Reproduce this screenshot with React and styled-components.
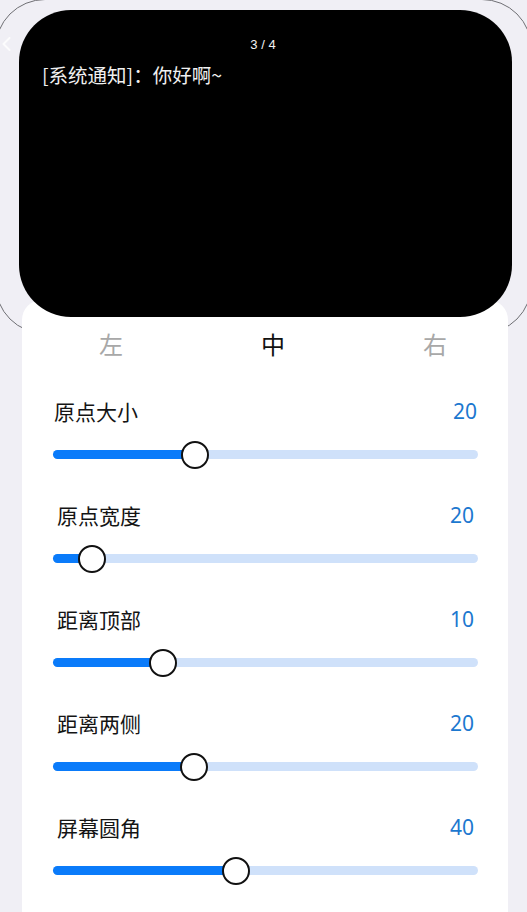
import React from "react";
import styled, { createGlobalStyle } from "styled-components";

const GlobalStyle = createGlobalStyle`
  html, body {
    margin: 0;
    padding: 0;
    background: #f0eff5;
    font-family: "Noto Sans CJK SC", "Noto Sans", sans-serif;
  }
`;

const sliders = [
  { label: "原点大小", value: 20, pct: 33.4, wide: true },
  { label: "原点宽度", value: 20, pct: 9.2 },
  { label: "距离顶部", value: 10, pct: 25.9 },
  { label: "距离两侧", value: 20, pct: 33.2 },
  { label: "屏幕圆角", value: 40, pct: 43 },
];

const tabs = ["左", "中", "右"];

const App = () => {
  return (
    <Page>
      <GlobalStyle />
      <Device>
        <BackButton aria-label="back">
          <svg width="9" height="14" viewBox="0 0 9 14">
            <polyline
              points="7.5,1 1.5,7 7.5,13"
              fill="none"
              stroke="#ffffff"
              strokeWidth="2"
              strokeLinecap="round"
              strokeLinejoin="round"
            />
          </svg>
        </BackButton>
        <Screen>
          <Counter>3 / 4</Counter>
          <Notice>[系统通知]：你好啊~</Notice>
        </Screen>
      </Device>
      <Card>
        <Tabs>
          {tabs.map((t) => (
            <Tab key={t} active={t === "中"}>
              {t}
            </Tab>
          ))}
        </Tabs>
        {sliders.map((s) => (
          <Row key={s.label}>
            <Header inset={s.wide ? "1px" : "4px"}>
              <Label>{s.label}</Label>
              <Value>{s.value}</Value>
            </Header>
            <Track>
              <Fill style={{ width: `${s.pct}%` }} />
              <Thumb style={{ left: `${s.pct}%` }} />
            </Track>
          </Row>
        ))}
      </Card>
    </Page>
  );
};

export default App;

const Page = styled.div`
  height: 912px;
  overflow: hidden;
`;

const Device = styled.div`
  position: relative;
  box-sizing: border-box;
  height: 335px;
  margin: -1px -5px 0;
  padding: 10px 19px 0 23px;
  border: 1px solid #6f6f74;
  border-radius: 50px;
`;

const BackButton = styled.div`
  position: absolute;
  left: 6px;
  top: 37px;
  opacity: 0.85;
  display: flex;
`;

const Screen = styled.div`
  position: relative;
  z-index: 2;
  height: 307px;
  box-sizing: border-box;
  padding: 27px 23px 0;
  background: #000;
  border-radius: 52px;
  display: flex;
  flex-direction: column;
`;

const Counter = styled.div`
  align-self: center;
  margin-right: 5px;
  font-family: "Liberation Sans", "Noto Sans", sans-serif;
  font-size: 13px;
  line-height: 16px;
  color: #f2f2f2;
`;

const Notice = styled.div`
  margin-top: 10px;
  font-size: 19.5px;
  line-height: 24px;
  color: #f0f0f0;
`;

const Card = styled.div`
  position: relative;
  z-index: 1;
  margin: -34px 19px 0 22px;
  padding-top: 29px;
  min-height: 640px;
  background: #ffffff;
  border-radius: 20px 20px 0 0;
`;

const Tabs = styled.div`
  display: grid;
  grid-template-columns: repeat(3, 162px);
  margin-left: 8px;
`;

const Tab = styled.div`
  text-align: center;
  font-size: 24px;
  line-height: 30px;
  color: ${({ active }) => (active ? "#111111" : "#a8a8a8")};
`;

const Row = styled.div`
  padding: 38px 30px 0 31px;
  & + & {
    padding-top: 42px;
  }
`;

const Header = styled.div`
  display: flex;
  justify-content: space-between;
  align-items: center;
  height: 28px;
  padding: 0 ${({ inset }) => inset};
`;

const Label = styled.span`
  font-size: 21px;
  line-height: 28px;
  color: #141414;
`;

const Value = styled.span`
  font-family: "Noto Sans", "Liberation Sans", sans-serif;
  font-size: 21px;
  line-height: 28px;
  color: #1c78cf;
`;

const Track = styled.div`
  position: relative;
  margin-top: 25px;
  height: 9px;
  border-radius: 5px;
  background: #cfe1fa;
`;

const Fill = styled.div`
  height: 100%;
  border-radius: 5px;
  background: #0a7bfa;
`;

const Thumb = styled.div`
  position: absolute;
  top: 50%;
  width: 24px;
  height: 24px;
  border: 2px solid #111111;
  border-radius: 50%;
  background: #ffffff;
  transform: translate(-50%, -50%);
`;
